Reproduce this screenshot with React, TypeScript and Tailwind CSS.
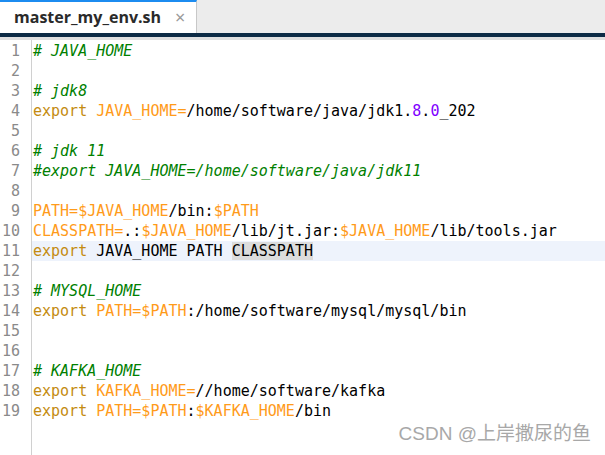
import React from "react";

type Seg = [string, string?];

const C = {
  com: "text-[#008000] italic",
  kw: "text-[#c48b10]",
  v: "text-[#ff9b1a]",
  num: "text-[#8000ff]",
  t: "text-[#000000]",
};

const lines: Seg[][] = [
  [["# JAVA_HOME", C.com]],
  [],
  [["# jdk8", C.com]],
  [
    ["export", C.kw],
    [" "],
    ["JAVA_HOME=", C.v],
    ["/home/software/java/jdk1."],
    ["8", C.num],
    ["."],
    ["0", C.num],
    ["_202"],
  ],
  [],
  [["# jdk 11", C.com]],
  [["#export JAVA_HOME=/home/software/java/jdk11", C.com]],
  [],
  [["PATH=$JAVA_HOME", C.v], ["/bin:"], ["$PATH", C.v]],
  [
    ["CLASSPATH=", C.v],
    [".:"],
    ["$JAVA_HOME", C.v],
    ["/lib/jt.jar:"],
    ["$JAVA_HOME", C.v],
    ["/lib/tools.jar"],
  ],
  [["export", C.kw], [" JAVA_HOME PATH "], ["CLASSPATH", "bg-[#dcdcdc]"]],
  [],
  [["# MYSQL_HOME", C.com]],
  [["export", C.kw], [" "], ["PATH=$PATH", C.v], [":/home/software/mysql/mysql/bin"]],
  [],
  [],
  [["# KAFKA_HOME", C.com]],
  [["export", C.kw], [" "], ["KAFKA_HOME=", C.v], ["//home/software/kafka"]],
  [["export", C.kw], [" "], ["PATH=$PATH", C.v], [":"], ["$KAFKA_HOME", C.v], ["/bin"]],
];

export default function App() {
  return (
    <div className="w-[605px] h-[455px] bg-white overflow-hidden relative flex flex-col">
      {/* tab bar */}
      <div className="h-[33px] bg-[#ececec] flex items-end shrink-0">
        <div className="h-[33px] w-[197px] bg-white border-t-2 border-[#1c8cf0] border-r border-r-[#c8c8c8] flex items-center pl-[14px] pb-[1px]">
          <span
            className="text-[16px] font-bold text-[#2a2a2a]"
            style={{ fontFamily: '"Open Sans", "Noto Sans", sans-serif' }}
          >
            master_my_env.sh
          </span>
          <span className="ml-[14px] text-[#9a9a9a] text-[18px] leading-none">×</span>
        </div>
      </div>
      <div className="h-[4px] bg-[#0d2b45] shrink-0" />
      <div className="h-[3px] bg-[#e0e0e0] shrink-0" />
      {/* editor */}
      <div
        className="flex-1 flex text-[15px]"
        style={{ fontFamily: '"DejaVu Sans Mono", "Liberation Mono", monospace' }}
      >
        <div className="w-[32px] border-r border-[#d0d0d0] pt-[1px] shrink-0">
          {lines.map((_, i) => (
            <div key={i} className="h-[20px] leading-[20px] text-right pr-[11px] text-[#8a8a8a] text-[15px]">
              {i + 1}
            </div>
          ))}
        </div>
        <div className="flex-1 pt-[1px]">
          {lines.map((segs, i) => (
            <div
              key={i}
              className={`h-[20px] leading-[20px] pl-[1px] whitespace-pre ${i === 10 ? "bg-[#eef3fc]" : ""}`}
            >
              {segs.map(([t, c], j) => (
                <span key={j} className={c ?? C.t}>
                  {t}
                </span>
              ))}
            </div>
          ))}
        </div>
      </div>
      <div
        className="absolute right-[14px] bottom-[7px] text-[19px] text-[#a8a8a8]"
        style={{ fontFamily: '"Liberation Sans", "Noto Sans CJK SC", sans-serif' }}
      >
        CSDN @上岸撒尿的鱼
      </div>
    </div>
  );
}
